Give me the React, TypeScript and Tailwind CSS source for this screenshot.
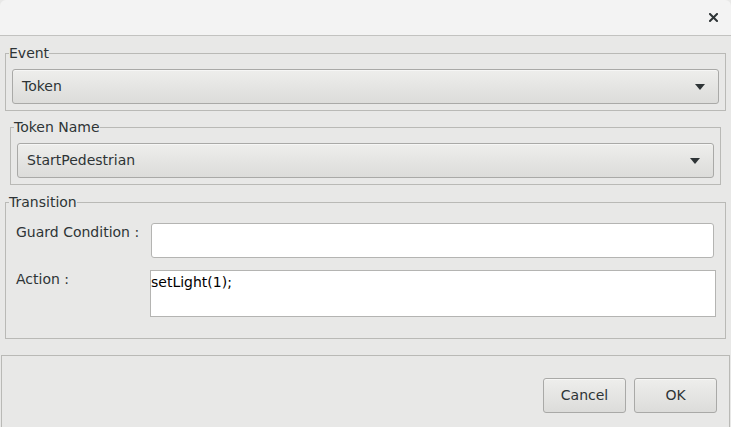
import { ChangeEvent, useEffect, useRef, useState } from 'react';

// ── Small pieces ──────────────────────────────────────────────────────────────
function Caret() {
  return (
    <svg width="10" height="6" viewBox="0 0 10 6" className="shrink-0">
      <path d="M0 0h10L5 6z" fill="#2e3436" />
    </svg>
  );
}

function Combo({ value, className }: { value: string; className?: string }) {
  return (
    <div
      className={`h-[35px] flex items-center justify-between pl-[9px] pr-[13px] rounded-[3px] border border-[#a9a9a7] bg-gradient-to-b from-[#eeeeec] to-[#dcdcda] text-[#2e3436] shadow-[inset_0_1px_0_#f6f6f5] ${className ?? ''}`}
    >
      <span>{value}</span>
      <Caret />
    </div>
  );
}

function Group({ title, className, children }: { title: string; className?: string; children: React.ReactNode }) {
  return (
    <fieldset className={`border border-[#b9b9b6] px-[6px] ${className ?? ''}`}>
      <legend className="ml-[-3px] px-0 leading-[16px] text-[#2e3436]">{title}</legend>
      {children}
    </fieldset>
  );
}

function Button({ label }: { label: string }) {
  return (
    <button className="w-[83px] h-[35px] rounded-[3px] border border-[#a9a9a7] bg-gradient-to-b from-[#eeeeec] to-[#dcdcda] text-[#2e3436] shadow-[inset_0_1px_0_#f6f6f5]">
      {label}
    </button>
  );
}

// ── Dialog ────────────────────────────────────────────────────────────────────
export default function App() {
  const [guard, setGuard] = useState('');
  const [action, setAction] = useState('setLight(1);');
  const actionRef = useRef<HTMLTextAreaElement>(null);

  // caret sits right after the "1", as in the editor
  useEffect(() => {
    const el = actionRef.current;
    if (el) { el.focus(); el.setSelectionRange(10, 10); }
  }, []);

  return (
    <div
      className="w-[731px] h-[427px] flex flex-col bg-[#e8e8e7] text-[14px] text-[#2e3436] overflow-hidden"
      style={{ fontFamily: '"DejaVu Sans", sans-serif' }}
    >
      {/* Title bar */}
      <div className="h-[36px] shrink-0 flex items-center justify-end pr-[13px] bg-[#f3f3f3] border-b border-[#c2c2c0] rounded-t-[6px]">
        <svg width="9" height="9" viewBox="0 0 9 9">
          <path d="M1 1l7 7M8 1L1 8" stroke="#2e3436" strokeWidth="2" strokeLinecap="square" />
        </svg>
      </div>

      {/* Event */}
      <Group title="Event" className="mx-[5px] mt-[9px] pb-[6px]">
        <Combo value="Token" className="mt-[8px]" />
      </Group>

      {/* Token Name */}
      <Group title="Token Name" className="mx-[10px] mt-[8px] pb-[6px]">
        <Combo value="StartPedestrian" className="mt-[8px]" />
      </Group>

      {/* Transition */}
      <Group title="Transition" className="mx-[5px] mt-[9px] pb-[21px]">
        <div className="mt-[13px] flex flex-col gap-[12px]">
          <div className="flex items-start">
            <span className="w-[139px] pl-[4px] pt-[1px] leading-[17px]">Guard Condition :</span>
            <input
              value={guard}
              onChange={(e: ChangeEvent<HTMLInputElement>) => setGuard(e.target.value)}
              className="w-[563px] h-[35px] rounded-[3px] border border-[#b4b4b2] bg-white px-[6px] outline-none"
            />
          </div>
          <div className="flex items-start">
            <span className="w-[138px] pl-[4px] pt-[1px] leading-[17px]">Action :</span>
            <textarea
              ref={actionRef}
              value={action}
              onChange={(e: ChangeEvent<HTMLTextAreaElement>) => setAction(e.target.value)}
              className="w-[566px] h-[47px] border border-[#b4b4b2] bg-white pt-[3px] px-0 leading-[17px] text-black caret-black resize-none outline-none"
            />
          </div>
        </div>
      </Group>

      {/* Button bar */}
      <div className="mt-[16px] mx-[1px] flex-1 border border-b-0 border-[#b9b9b6] flex items-start justify-end gap-[8px] pt-[22px] pr-[12px]">
        <Button label="Cancel" />
        <Button label="OK" />
      </div>
    </div>
  );
}
